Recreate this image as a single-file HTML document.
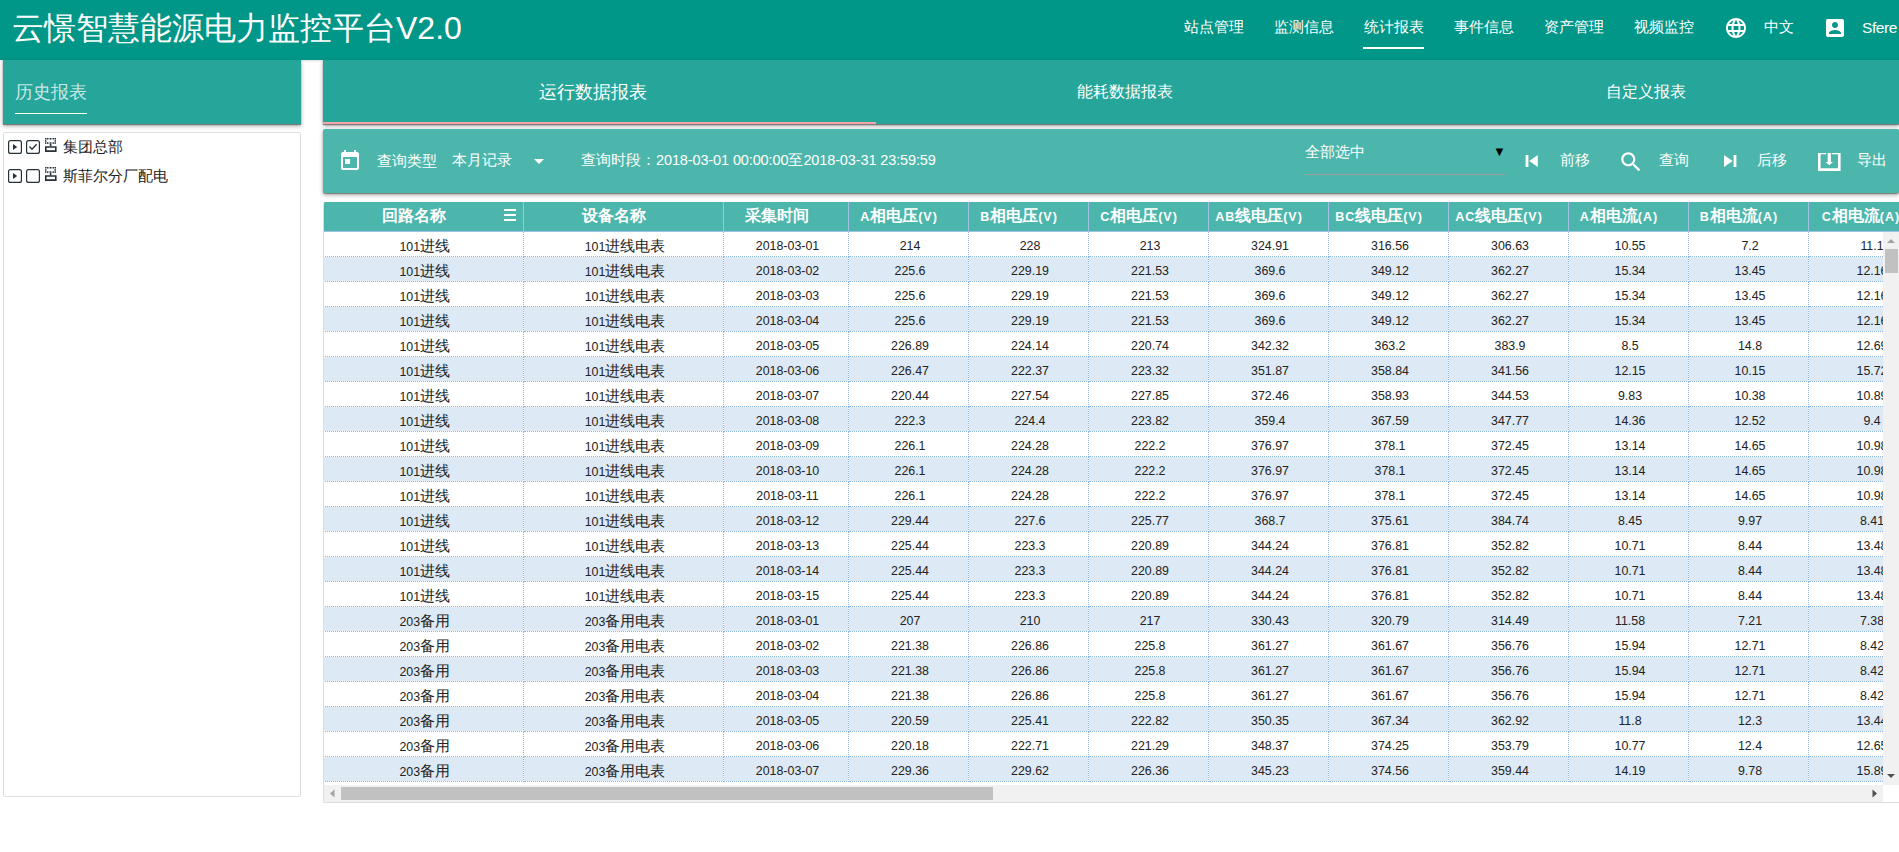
<!DOCTYPE html>
<html><head><meta charset="utf-8">
<style>
*{box-sizing:border-box;margin:0;padding:0}
html,body{width:1899px;height:852px;overflow:hidden;background:#fff;font-family:"Liberation Sans",sans-serif;position:relative}
.abs{position:absolute}
#hdr{left:0;top:0;width:1899px;height:60px;background:#009688;box-shadow:0 1px 2px rgba(0,0,0,.15)}
#title{left:12px;top:8px;font-size:32px;font-weight:300;color:#fff;white-space:nowrap;line-height:40px}
.nav{top:17px;font-size:15px;color:#fff;white-space:nowrap;line-height:20px}
#navul{left:1363px;top:47px;width:61px;height:2px;background:#fff}
#lcard{left:3px;top:60px;width:298px;height:64px;background:#26a69a;box-shadow:0 1px 1px rgba(0,0,0,.35),0 2px 4px rgba(0,0,0,.35)}
#ltitle{left:15px;top:81px;font-size:18px;color:rgba(255,255,255,.75);line-height:22px;white-space:nowrap}
#lul{left:15px;top:113px;width:72px;height:1px;background:#fff}
#tree{left:3px;top:132px;width:298px;height:665px;border:1px solid #ddd;background:#fff;border-radius:2px}
.tr{left:8px;height:16px;white-space:nowrap}
.tbox{position:absolute;width:14px;height:14px;border:1.5px solid #263238;border-radius:2px}
.ttxt{position:absolute;left:55px;font-size:14.5px;color:#222;line-height:16px}
#tabs{left:323px;top:60px;width:1576px;height:64px;background:#26a69a;box-shadow:0 1px 1px rgba(0,0,0,.35),0 2px 4px rgba(0,0,0,.35)}
.tab{top:80px;color:#fff;white-space:nowrap;line-height:24px}
#tabind{left:323px;top:122px;width:553px;height:2px;background:#f4a5a5}
#tbar{left:323px;top:129px;width:1576px;height:64px;background:#4db6ac;box-shadow:0 1px 1px rgba(0,0,0,.35),0 2px 4px rgba(0,0,0,.35);border-radius:2px}
.tb{top:150px;font-size:14.5px;color:#fff;white-space:nowrap;line-height:20px}
svg.ic{position:absolute;fill:#fff}
#grid{left:323px;top:202px;width:1576px;height:601px;background:#fff;border-left:1px solid #ddd;border-bottom:1px solid #ddd;overflow:hidden;border-radius:2px 0 0 2px}
table{border-collapse:collapse;table-layout:fixed;position:absolute;left:-1px;top:0;width:1609px}
th{background:#4db6ac;color:#fff;font-weight:bold;font-size:16px;height:29px;border-right:1px solid #9ec3e6;border-bottom:1px solid #9ec3e6;white-space:nowrap;overflow:hidden;padding:0 18px 0 0;text-align:center}
td{height:25px;font-size:12.4px;line-height:15px;vertical-align:top;color:#222;text-align:center;border-right:1px dotted #8fb8e3;border-bottom:1px dotted #8fb8e3;white-space:nowrap;overflow:hidden;padding:7px 0 0 4px}
.c{font-size:14.5px}
tr.alt td{background:#dde9f5}
.l{font-size:12.5px;letter-spacing:1px}
#vscroll{left:1883px;top:232px;width:16px;height:553px;background:#f1f1f1}
#hscroll{left:324px;top:785px;width:1559px;height:17px;background:#f1f1f1}
</style></head><body>
<div id="hdr" class="abs"></div>
<div id="title" class="abs">云憬智慧能源电力监控平台V2.0</div>
<div class="abs nav" style="left:1184px">站点管理</div>
<div class="abs nav" style="left:1274px">监测信息</div>
<div class="abs nav" style="left:1364px">统计报表</div>
<div class="abs nav" style="left:1454px">事件信息</div>
<div class="abs nav" style="left:1544px">资产管理</div>
<div class="abs nav" style="left:1634px">视频监控</div>
<div id="navul" class="abs"></div>
<svg class="ic" style="left:1724px;top:16px" width="24" height="24" viewBox="0 0 24 24"><path d="M11.99 2C6.47 2 2 6.48 2 12s4.47 10 9.99 10C17.52 22 22 17.52 22 12S17.52 2 11.99 2zm6.930 6h-2.95c-.32-1.25-.78-2.45-1.38-3.56 1.84.63 3.370 1.91 4.330 3.56zM12 4.04c.83 1.2 1.48 2.53 1.91 3.96h-3.82c.43-1.430 1.08-2.76 1.91-3.960zM4.26 14C4.1 13.36 4 12.69 4 12s.1-1.36.26-2h3.38c-.08.66-.14 1.32-.14 2 0 .68.06 1.34.14 2H4.26zm.82 2h2.95c.32 1.25.78 2.45 1.38 3.56-1.84-.63-3.37-1.9-4.33-3.56zm2.95-8H5.08c.96-1.66 2.49-2.93 4.33-3.56C8.81 5.55 8.35 6.75 8.03 8zM12 19.96c-.83-1.2-1.48-2.53-1.91-3.96h3.820c-.43 1.43-1.08 2.76-1.91 3.96zM14.34 14H9.66c-.09-.66-.16-1.32-.16-2 0-.68.07-1.35.16-2h4.68c.09.65.16 1.32.16 2 0 .68-.07 1.34-.16 2zm.25 5.56c.6-1.11 1.06-2.31 1.38-3.56h2.95c-.96 1.65-2.49 2.93-4.33 3.56zM16.36 14c.08-.66.14-1.32.14-2 0-.68-.06-1.34-.14-2h3.38c.16.64.26 1.310.26 2s-.1 1.36-.26 2h-3.38z"/></svg>
<div class="abs nav" style="left:1764px">中文</div>
<svg class="ic" style="left:1823px;top:16px" width="24" height="24" viewBox="0 0 24 24"><path d="M3 5v14c0 1.1.89 2 2 2h14c1.1 0 2-.9 2-2V5c0-1.1-.9-2-2-2H5c-1.11 0-2 .9-2 2zm12 4c0 1.66-1.34 3-3 3s-3-1.34-3-3 1.34-3 3-3 3 1.34 3 3zm-9 8c0-2 4-3.1 6-3.1s6 1.1 6 3.1v1H6v-1z"/></svg>
<div class="abs nav" style="left:1862px;top:18px;font-size:15.5px;letter-spacing:-0.4px">Sfere</div>

<div id="lcard" class="abs"></div>
<div id="ltitle" class="abs">历史报表</div>
<div id="lul" class="abs"></div>
<div id="tree" class="abs"></div>
<svg class="abs" style="left:0;top:132px" width="200" height="60" viewBox="0 132 200 60">
<g fill="none" stroke="#263238" stroke-width="1.2">
<rect x="8.6" y="140.6" width="12.8" height="12.8" rx="2"/>
<rect x="26.6" y="140.6" width="12.8" height="12.8" rx="2"/>
<path d="M29.5 146.5 L32 149.2 L36.6 144.2" stroke-width="1.3"/>
<rect x="8.6" y="169.6" width="12.8" height="12.8" rx="2"/>
<rect x="26.6" y="169.6" width="12.8" height="12.8" rx="2"/>
</g>
<g fill="#263238">
<path d="M13 144 L17.2 147 L13 150Z"/>
<path d="M13 173 L17.2 176 L13 179Z"/>
</g>
<g fill="#263238">
<rect x="45" y="138" width="1.5" height="1.5"/><rect x="47" y="138" width="1.5" height="1.5"/><rect x="49.5" y="138" width="2" height="1.5"/><rect x="52.5" y="138" width="1.5" height="1.5"/><rect x="54.5" y="138" width="1.5" height="1.5"/>
<rect x="45" y="140.2" width="1.5" height="1.5"/><rect x="54.5" y="140.2" width="1.5" height="1.5"/>
<rect x="45" y="142.3" width="1.5" height="1.5"/><rect x="47" y="142.3" width="1.5" height="1.5"/><rect x="49.5" y="142.3" width="2" height="1.5"/><rect x="52.5" y="142.3" width="1.5" height="1.5"/><rect x="54.5" y="142.3" width="1.5" height="1.5"/>
<rect x="49.8" y="144" width="1.6" height="2.4"/>
<path d="M45 146.2h11.6v5.8H45z M46.6 147.8v2.5h8.4v-2.5z" fill-rule="evenodd"/>
</g>
<g fill="#263238" transform="translate(0 29)">
<rect x="45" y="138" width="1.5" height="1.5"/><rect x="47" y="138" width="1.5" height="1.5"/><rect x="49.5" y="138" width="2" height="1.5"/><rect x="52.5" y="138" width="1.5" height="1.5"/><rect x="54.5" y="138" width="1.5" height="1.5"/>
<rect x="45" y="140.2" width="1.5" height="1.5"/><rect x="54.5" y="140.2" width="1.5" height="1.5"/>
<rect x="45" y="142.3" width="1.5" height="1.5"/><rect x="47" y="142.3" width="1.5" height="1.5"/><rect x="49.5" y="142.3" width="2" height="1.5"/><rect x="52.5" y="142.3" width="1.5" height="1.5"/><rect x="54.5" y="142.3" width="1.5" height="1.5"/>
<rect x="49.8" y="144" width="1.6" height="2.4"/>
<path d="M45 146.2h11.6v5.8H45z M46.6 147.8v2.5h8.4v-2.5z" fill-rule="evenodd"/>
</g>
</svg>
<div class="abs ttxt" style="left:63px;top:139px">集团总部</div>
<div class="abs ttxt" style="left:63px;top:168px">斯菲尔分厂配电</div>

<div id="tabs" class="abs"></div>
<div class="abs tab" style="left:539px;font-size:18px">运行数据报表</div>
<div class="abs tab" style="left:1077px;font-size:16px">能耗数据报表</div>
<div class="abs tab" style="left:1606px;font-size:16px">自定义报表</div>
<div id="tabind" class="abs"></div>

<div id="tbar" class="abs"></div>
<svg class="ic" style="left:338px;top:148.5px" width="24" height="24" viewBox="0 0 24 24"><path d="M19 3h-1V1h-2v2H8V1H6v2H5c-1.11 0-1.99.9-1.99 2L3 19c0 1.1.89 2 2 2h14c1.1 0 2-.9 2-2V5c0-1.1-.9-2-2-2zm0 16H5V8h14v11zM7 10h5v5H7z"/></svg>
<div class="abs tb" style="left:377px;top:151px">查询类型</div>
<div class="abs tb" style="left:452px">本月记录</div>
<svg class="ic" style="left:527px;top:149px" width="24" height="24" viewBox="0 0 24 24"><path d="M7 10l5 5 5-5z"/></svg>
<div class="abs tb" style="left:581px">查询时段：<span style="letter-spacing:-0.12px">2018-03-01 00:00:00</span>至<span style="letter-spacing:-0.12px">2018-03-31 23:59:59</span></div>
<div class="abs tb" style="left:1305px;top:142px">全部选中</div>
<div class="abs" style="left:1305px;top:174px;width:200px;height:1px;background:#9e9e9e"></div>
<div class="abs" style="left:1493px;top:144px;font-size:13px;color:#000">▼</div>
<svg class="ic" style="left:1520px;top:149px" width="24" height="24" viewBox="0 0 24 24"><path d="M5.6 6h2.8v12H5.6zm3.6 6l8.6 6.1V5.9z"/></svg>
<div class="abs tb" style="left:1560px">前移</div>
<svg class="ic" style="left:1618px;top:149px" width="26" height="26" viewBox="0 0 24 24"><path d="M15.5 14h-.79l-.28-.27C15.41 12.59 16 11.11 16 9.5 16 5.91 13.09 3 9.5 3S3 5.91 3 9.5 5.910 16 9.5 16c1.61 0 3.09-.59 4.23-1.57l.27.28v.79l5 4.99L20.49 19l-4.99-5zm-6 0C7.01 14 5 11.99 5 9.5S7.01 5 9.5 5 14 7.01 14 9.5 11.99 14 9.5 14z"/></svg>
<div class="abs tb" style="left:1659px">查询</div>
<svg class="ic" style="left:1718px;top:149px" width="24" height="24" viewBox="0 0 24 24"><path d="M6 18.1l8.6-6.1L6 5.9v12.2zM15.6 6v12h2.8V6h-2.8z"/></svg>
<div class="abs tb" style="left:1757px">后移</div>
<svg class="ic" style="left:1817px;top:150px" width="24" height="24" viewBox="0 0 24 24"><path d="M1 3h2.6v18H1zM21 3h2.6v18H21zM1 18.3h22.6V21H1zM1 3h8.2v1.3H1zM14.8 3h8.8v1.3h-8.8zM10.7 3h3.2v9.5h-3.2zM8.6 12h7.3l-3.65 3.2z"/></svg>
<div class="abs tb" style="left:1857px">导出</div>

<div id="grid" class="abs">
<table>
<colgroup><col style="width:200px"><col style="width:200px"><col style="width:125px"><col style="width:120px"><col style="width:120px"><col style="width:120px"><col style="width:120px"><col style="width:120px"><col style="width:120px"><col style="width:120px"><col style="width:120px"><col style="width:124px"></colgroup>
<tr><th>回路名称</th><th>设备名称</th><th>采集时间</th><th><span class="l">A</span>相电压<span class="l">(V)</span></th><th><span class="l">B</span>相电压<span class="l">(V)</span></th><th><span class="l">C</span>相电压<span class="l">(V)</span></th><th><span class="l">AB</span>线电压<span class="l">(V)</span></th><th><span class="l">BC</span>线电压<span class="l">(V)</span></th><th><span class="l">AC</span>线电压<span class="l">(V)</span></th><th><span class="l">A</span>相电流<span class="l">(A)</span></th><th><span class="l">B</span>相电流<span class="l">(A)</span></th><th><span class="l">C</span>相电流<span class="l">(A)</span></th></tr>
<tr><td>101<span class="c">进线</span></td><td>101<span class="c">进线电表</span></td><td>2018-03-01</td><td>214</td><td>228</td><td>213</td><td>324.91</td><td>316.56</td><td>306.63</td><td>10.55</td><td>7.2</td><td>11.1</td></tr>
<tr class="alt"><td>101<span class="c">进线</span></td><td>101<span class="c">进线电表</span></td><td>2018-03-02</td><td>225.6</td><td>229.19</td><td>221.53</td><td>369.6</td><td>349.12</td><td>362.27</td><td>15.34</td><td>13.45</td><td>12.16</td></tr>
<tr><td>101<span class="c">进线</span></td><td>101<span class="c">进线电表</span></td><td>2018-03-03</td><td>225.6</td><td>229.19</td><td>221.53</td><td>369.6</td><td>349.12</td><td>362.27</td><td>15.34</td><td>13.45</td><td>12.16</td></tr>
<tr class="alt"><td>101<span class="c">进线</span></td><td>101<span class="c">进线电表</span></td><td>2018-03-04</td><td>225.6</td><td>229.19</td><td>221.53</td><td>369.6</td><td>349.12</td><td>362.27</td><td>15.34</td><td>13.45</td><td>12.16</td></tr>
<tr><td>101<span class="c">进线</span></td><td>101<span class="c">进线电表</span></td><td>2018-03-05</td><td>226.89</td><td>224.14</td><td>220.74</td><td>342.32</td><td>363.2</td><td>383.9</td><td>8.5</td><td>14.8</td><td>12.69</td></tr>
<tr class="alt"><td>101<span class="c">进线</span></td><td>101<span class="c">进线电表</span></td><td>2018-03-06</td><td>226.47</td><td>222.37</td><td>223.32</td><td>351.87</td><td>358.84</td><td>341.56</td><td>12.15</td><td>10.15</td><td>15.72</td></tr>
<tr><td>101<span class="c">进线</span></td><td>101<span class="c">进线电表</span></td><td>2018-03-07</td><td>220.44</td><td>227.54</td><td>227.85</td><td>372.46</td><td>358.93</td><td>344.53</td><td>9.83</td><td>10.38</td><td>10.89</td></tr>
<tr class="alt"><td>101<span class="c">进线</span></td><td>101<span class="c">进线电表</span></td><td>2018-03-08</td><td>222.3</td><td>224.4</td><td>223.82</td><td>359.4</td><td>367.59</td><td>347.77</td><td>14.36</td><td>12.52</td><td>9.4</td></tr>
<tr><td>101<span class="c">进线</span></td><td>101<span class="c">进线电表</span></td><td>2018-03-09</td><td>226.1</td><td>224.28</td><td>222.2</td><td>376.97</td><td>378.1</td><td>372.45</td><td>13.14</td><td>14.65</td><td>10.98</td></tr>
<tr class="alt"><td>101<span class="c">进线</span></td><td>101<span class="c">进线电表</span></td><td>2018-03-10</td><td>226.1</td><td>224.28</td><td>222.2</td><td>376.97</td><td>378.1</td><td>372.45</td><td>13.14</td><td>14.65</td><td>10.98</td></tr>
<tr><td>101<span class="c">进线</span></td><td>101<span class="c">进线电表</span></td><td>2018-03-11</td><td>226.1</td><td>224.28</td><td>222.2</td><td>376.97</td><td>378.1</td><td>372.45</td><td>13.14</td><td>14.65</td><td>10.98</td></tr>
<tr class="alt"><td>101<span class="c">进线</span></td><td>101<span class="c">进线电表</span></td><td>2018-03-12</td><td>229.44</td><td>227.6</td><td>225.77</td><td>368.7</td><td>375.61</td><td>384.74</td><td>8.45</td><td>9.97</td><td>8.41</td></tr>
<tr><td>101<span class="c">进线</span></td><td>101<span class="c">进线电表</span></td><td>2018-03-13</td><td>225.44</td><td>223.3</td><td>220.89</td><td>344.24</td><td>376.81</td><td>352.82</td><td>10.71</td><td>8.44</td><td>13.48</td></tr>
<tr class="alt"><td>101<span class="c">进线</span></td><td>101<span class="c">进线电表</span></td><td>2018-03-14</td><td>225.44</td><td>223.3</td><td>220.89</td><td>344.24</td><td>376.81</td><td>352.82</td><td>10.71</td><td>8.44</td><td>13.48</td></tr>
<tr><td>101<span class="c">进线</span></td><td>101<span class="c">进线电表</span></td><td>2018-03-15</td><td>225.44</td><td>223.3</td><td>220.89</td><td>344.24</td><td>376.81</td><td>352.82</td><td>10.71</td><td>8.44</td><td>13.48</td></tr>
<tr class="alt"><td>203<span class="c">备用</span></td><td>203<span class="c">备用电表</span></td><td>2018-03-01</td><td>207</td><td>210</td><td>217</td><td>330.43</td><td>320.79</td><td>314.49</td><td>11.58</td><td>7.21</td><td>7.38</td></tr>
<tr><td>203<span class="c">备用</span></td><td>203<span class="c">备用电表</span></td><td>2018-03-02</td><td>221.38</td><td>226.86</td><td>225.8</td><td>361.27</td><td>361.67</td><td>356.76</td><td>15.94</td><td>12.71</td><td>8.42</td></tr>
<tr class="alt"><td>203<span class="c">备用</span></td><td>203<span class="c">备用电表</span></td><td>2018-03-03</td><td>221.38</td><td>226.86</td><td>225.8</td><td>361.27</td><td>361.67</td><td>356.76</td><td>15.94</td><td>12.71</td><td>8.42</td></tr>
<tr><td>203<span class="c">备用</span></td><td>203<span class="c">备用电表</span></td><td>2018-03-04</td><td>221.38</td><td>226.86</td><td>225.8</td><td>361.27</td><td>361.67</td><td>356.76</td><td>15.94</td><td>12.71</td><td>8.42</td></tr>
<tr class="alt"><td>203<span class="c">备用</span></td><td>203<span class="c">备用电表</span></td><td>2018-03-05</td><td>220.59</td><td>225.41</td><td>222.82</td><td>350.35</td><td>367.34</td><td>362.92</td><td>11.8</td><td>12.3</td><td>13.44</td></tr>
<tr><td>203<span class="c">备用</span></td><td>203<span class="c">备用电表</span></td><td>2018-03-06</td><td>220.18</td><td>222.71</td><td>221.29</td><td>348.37</td><td>374.25</td><td>353.79</td><td>10.77</td><td>12.4</td><td>12.65</td></tr>
<tr class="alt"><td>203<span class="c">备用</span></td><td>203<span class="c">备用电表</span></td><td>2018-03-07</td><td>229.36</td><td>229.62</td><td>226.36</td><td>345.23</td><td>374.56</td><td>359.44</td><td>14.19</td><td>9.78</td><td>15.89</td></tr></table>
</div>
<div class="abs" style="left:504px;top:209px;width:12px;height:2px;background:#fff"></div>
<div class="abs" style="left:504px;top:214px;width:12px;height:2px;background:#fff"></div>
<div class="abs" style="left:504px;top:219px;width:12px;height:2px;background:#fff"></div>
<div id="vscroll" class="abs"></div>
<svg class="abs" style="left:1883px;top:232px" width="16" height="16"><path d="M4 11h8L8 7z" fill="#a3a3a3"/></svg>
<div class="abs" style="left:1885px;top:249px;width:13px;height:24px;background:#c1c1c1"></div>
<svg class="abs" style="left:1883px;top:768px" width="16" height="16"><path d="M4 6h8L8 10z" fill="#505050"/></svg>
<div id="hscroll" class="abs"></div>
<svg class="abs" style="left:324px;top:785px" width="17" height="17"><path d="M10.5 4.5v8L6 8.5z" fill="#a3a3a3"/></svg>
<div class="abs" style="left:341px;top:787px;width:652px;height:13px;background:#c1c1c1"></div>
<svg class="abs" style="left:1866px;top:785px" width="17" height="17"><path d="M6.5 4.5v8L11 8.5z" fill="#505050"/></svg>
</body></html>
